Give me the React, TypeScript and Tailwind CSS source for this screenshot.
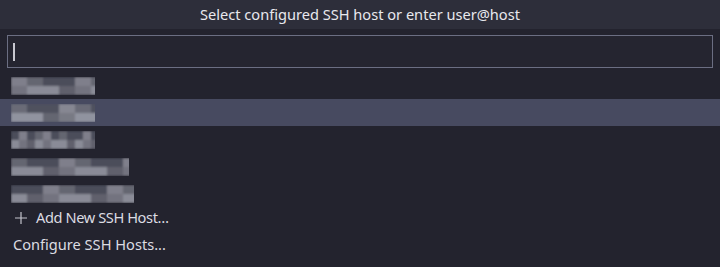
const hosts = [
  { w: 84, seed: 1 },
  { w: 84, seed: 2 },
  { w: 84, seed: 3 },
  { w: 118, seed: 4 },
  { w: 123, seed: 5 },
];

const palette = ["#50515e", "#5f606c", "#6c6d78", "#7b7c87", "#898a95", "#666772", "#585965", "#9597a2"];

function Mosaic({ w, seed, selected }: { w: number; seed: number; selected?: boolean }) {
  const cols = Math.ceil(w / 8);
  const cells = [];
  for (let r = 0; r < 2; r++) {
    for (let c = 0; c < cols; c++) {
      const i = (c * 7 + r * 3 + seed * 5 + ((c * c + seed) % 4)) % palette.length;
      const base = r === 1 ? Math.min(i + 2, palette.length - 1) : Math.max(i - 2, 0);
      cells.push(
        <rect key={`${r}-${c}`} x={c * 8} y={r * 9} width={8} height={9} fill={palette[base]} opacity={selected ? 0.95 : 0.9} />
      );
    }
  }
  return (
    <svg width={w} height={18} viewBox={`0 0 ${w} 18`}>
      <defs>
        <filter id={`b${seed}`}>
          <feGaussianBlur stdDeviation="1" />
        </filter>
      </defs>
      <g filter={`url(#b${seed})`}>{cells}</g>
    </svg>
  );
}

export default function App() {
  return (
    <div className="w-[720px] h-[267px] bg-[#23232e] text-[14.6px] text-[#dcdce2] overflow-hidden" style={{ fontFamily: '"Noto Sans", "Open Sans", sans-serif' }}>
      {/* Title bar */}
      <div className="h-[29px] bg-[#2d2e3a] flex items-center justify-center text-[#e8e8ee]">
        Select configured SSH host or enter user@host
      </div>

      {/* Input */}
      <div className="px-[7px] pt-[6px] pb-[4px]">
        <div className="h-[33px] border border-[#6b6e82] bg-[#252530] flex items-center px-[5px]">
          <div className="w-[2px] h-[18px] bg-[#c8c8d0]" />
        </div>
      </div>

      {/* Host list */}
      <div className="flex flex-col">
        {hosts.map((h, i) => (
          <div key={h.seed} className={`h-[27px] flex items-center pl-[11px] ${i === 1 ? "bg-[#474a60]" : ""}`}>
            <Mosaic w={h.w} seed={h.seed} selected={i === 1} />
          </div>
        ))}
        <div className="h-[22px] flex items-center pl-[14px] gap-[8px]">
          <svg width="14" height="14" viewBox="0 0 14 14" className="text-[#c4c4cc]">
            <path d="M7 1v12M1 7h12" stroke="currentColor" strokeWidth="1.2" />
          </svg>
          <span className="tracking-[-0.4px]">Add New SSH Host…</span>
        </div>
        <div className="h-[27px] mt-[2px] flex items-center pl-[13px]">Configure SSH Hosts...</div>
      </div>
    </div>
  );
}
